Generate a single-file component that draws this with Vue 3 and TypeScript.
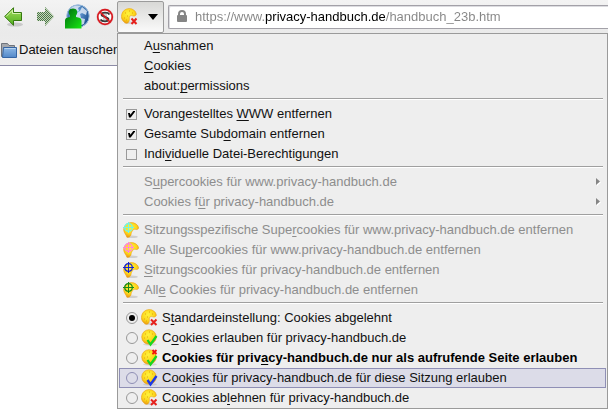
<script setup lang="ts">
import { ref } from 'vue'

type Label = [before: string, key: string, after: string]
type Badge = 'deny' | 'allow' | 'referrer' | 'session'

const address = ref('https://www.privacy-handbuch.de/handbuch_23b.htm')

const links: Label[] = [
  ['A', 'u', 'snahmen'],
  ['', 'C', 'ookies'],
  ['about:', 'p', 'ermissions'],
]

const options = ref<{ label: Label; checked: boolean }[]>([
  { label: ['Vorangestelltes ', 'W', 'WW entfernen'], checked: true },
  { label: ['Gesamte Sub', 'd', 'omain entfernen'], checked: true },
  { label: ['Indi', 'v', 'iduelle Datei-Berechtigungen'], checked: false },
])

const submenus: Label[] = [
  ['S', 'u', 'percookies für www.privacy-handbuch.de'],
  ['Cookies f', 'ü', 'r privacy-handbuch.de'],
]

const removals: { label: Label; color: string }[] = [
  { label: ['Sitzungsspezifische Supe', 'r', 'cookies für www.privacy-handbuch.de entfernen'], color: '#70f4e8' },
  { label: ['Alle Su', 'p', 'ercookies für www.privacy-handbuch.de entfernen'], color: '#ff86dc' },
  { label: ['', 'S', 'itzungscookies für privacy-handbuch.de entfernen'], color: '#1420d8' },
  { label: ['All', 'e', ' Cookies für privacy-handbuch.de entfernen'], color: '#168a1c' },
]

const policies: { label: Label; badge: Badge }[] = [
  { label: ['S', 't', 'andardeinstellung: Cookies abgelehnt'], badge: 'deny' },
  { label: ['C', 'o', 'okies erlauben für privacy-handbuch.de'], badge: 'allow' },
  { label: ['Cookies für priv', 'a', 'cy-handbuch.de nur als aufrufende Seite erlauben'], badge: 'referrer' },
  { label: ['Cook', 'i', 'es für privacy-handbuch.de für diese Sitzung erlauben'], badge: 'session' },
  { label: ['Cookies ab', 'l', 'ehnen für privacy-handbuch.de'], badge: 'deny' },
]
const policy = ref(0)
const highlighted = ref(3)
</script>

<template>
  <div class="browser">
    <svg class="defs" aria-hidden="true">
      <defs>
        <radialGradient id="dough" cx="45%" cy="35%" r="65%">
          <stop offset="0" stop-color="#fff33c" />
          <stop offset=".65" stop-color="#fbd51c" />
          <stop offset="1" stop-color="#ec9a10" />
        </radialGradient>
        <linearGradient id="leaf" x1="0" y1="0" x2="0" y2="1">
          <stop offset="0" stop-color="#a5dc60" />
          <stop offset="1" stop-color="#4fb01c" />
        </linearGradient>
        <linearGradient id="person" x1="0" y1="0" x2="1" y2="1">
          <stop offset="0" stop-color="#006b10" />
          <stop offset="1" stop-color="#16e810" />
        </linearGradient>
        <radialGradient id="globe" cx="40%" cy="35%" r="65%">
          <stop offset="0" stop-color="#7fb6ec" />
          <stop offset="1" stop-color="#1d5190" />
        </radialGradient>
        <linearGradient id="folder" x1="0" y1="0" x2="0" y2="1">
          <stop offset="0" stop-color="#8db8e6" />
          <stop offset="1" stop-color="#5288c8" />
        </linearGradient>
        <pattern id="dither" width="2" height="2" patternUnits="userSpaceOnUse">
          <path d="M0 0h1v1H0zM1 1h1v1H1z" fill="#4b7050" />
        </pattern>
        <g id="cookie">
          <ellipse cx="9" cy="14.800" rx="6" ry="1.300" fill="#888" opacity=".25" />
          <path d="M3 14C.5 12 0 9 .7 6.500 1.500 3 4.500.7 8 .6c3.800 0 6.500 1.900 7.400 5.400-.4 1.800-1.900 2.400-3.400 2-1.300-.6-2.500-.6-3.300.4-.7.900-.2 1.800-.3 3-.1 1.900-1 3.800-2.600 3.900-1 0-2-.5-2.800-1.300z" fill="url(#dough)" stroke="#e9a31d" stroke-width=".6" />
          <path d="M4 5h1M8 3h1M6 8h1M3 10h1M11 5h1M5 12h1" stroke="#e2a40c" />
        </g>
        <g id="bitten-cookie">
          <ellipse cx="9" cy="14.800" rx="6" ry="1.300" fill="#888" opacity=".3" />
          <path d="M4 15.300C3 12.500 1 11 .7 8 .6 4 4 .6 8 .6c4 0 7 2 7.700 5.400-1 1.800-2.200 1.800-3.500 1.200-1.500-.2-2.200.8-3 2-.9 1.200-1 2-1.200 3.500-.3 1.800-2 2.800-4 2.600z" fill="url(#dough)" stroke="#eea01a" stroke-width=".6" />
        </g>
        <g id="whole-cookie">
          <ellipse cx="9" cy="15.300" rx="7" ry="1.200" fill="#888" opacity=".25" />
          <circle cx="8" cy="8" r="7.300" fill="url(#dough)" stroke="#e9a31d" stroke-width=".6" />
          <path d="M4 5h1M8 3h1M6 8h1M3 9h1M11 5h1M7 12h1" stroke="#e2a40c" />
        </g>
      </defs>
    </svg>

    <header>
      <div class="toolbar">
        <button class="tool" aria-label="Zurück">
          <svg width="20" height="20" viewBox="0 0 20 20">
            <ellipse cx="11" cy="17.500" rx="8" ry="2" fill="#777" opacity=".3" />
            <path d="M.7 9.500 9.500.7V5.500H17.500V13.500H9.500V18.300z" fill="url(#leaf)" stroke="#35780f" />
            <path d="M2.200 9.500 8.500 3.200V6.500H16.500" fill="none" stroke="#d3f2ae" />
          </svg>
        </button>
        <button class="tool forward" aria-label="Vor" disabled>
          <svg width="20" height="20" viewBox="0 0 20 20">
            <path d="M19 9.500 10 0V5H2V14H10V19z" fill="#c6dcb5" />
            <path d="M19 9.500 10 0V5H2V14H10V19z" fill="url(#dither)" />
          </svg>
        </button>
        <button class="tool wide" aria-label="Identität">
          <svg width="26" height="26" viewBox="0 0 26 26">
            <circle cx="14" cy="12" r="11.200" fill="url(#globe)" stroke="#9bbcdc" />
            <path d="M6 5c3-4 8-4 11-3l-3 2 1 3-4 1-2-3zM18 3l5 4-1 4-4-2-2 1 1 4 4 1-1 5-5 2-1-6-3-3 3-5 2-1z" fill="#dce8f4" opacity=".85" />
            <path d="M1 24.500V17c0-3 2-3.500 5-4V11.500C3.500 8 5 4.500 9 4.500s5.500 3.500 3 7V13c3 .5 5.500 1 5.500 4v7.500z" fill="url(#person)" />
          </svg>
        </button>
        <button class="tool stop" aria-label="Skripte sperren">
          <svg width="18" height="18" viewBox="0 0 18 18">
            <circle cx="9" cy="9" r="7.500" fill="#fff" stroke="#e6d6d6" stroke-width="2.600" />
            <path d="M13.500 6.500C12 4 5.500 4 5.500 6.700c0 2.300 7 2 7 4.600 0 2.700-6.500 2.700-8 .2" fill="none" stroke="#333" stroke-width="1.800" />
            <path d="M8 4v10M10 4v10" stroke="#555" stroke-width=".6" />
            <circle cx="9" cy="9" r="7.300" fill="none" stroke="#d81920" stroke-width="1.700" />
            <path d="M4 4l10 10" stroke="#e01a20" stroke-width="1.700" />
          </svg>
        </button>
        <button class="cookie-button" aria-label="Cookie-Berechtigungen" aria-haspopup="menu" aria-expanded="true">
          <svg width="18" height="18" viewBox="0 0 18 18">
            <use href="#cookie" />
            <path d="M10.500 10.500l5 5.500M15.500 10.500l-5 5.500" stroke="#e6201c" stroke-width="2" />
          </svg>
          <svg width="10" height="6" viewBox="0 0 10 6"><path d="M0 0h10L5 6z" /></svg>
        </button>
        <div class="address">
          <svg width="12" height="13" viewBox="0 0 12 13">
            <path d="M3 6V4a3 3 0 0 1 6 0v2" fill="none" stroke="#858585" stroke-width="2" />
            <rect x="1" y="5" width="10" height="7" rx="1" fill="#858585" />
          </svg>
          <input v-model="address" type="text" aria-label="Adresse" spellcheck="false" />
        </div>
      </div>
      <nav class="bookmarks">
        <a href="#">
          <svg width="18" height="18" viewBox="0 0 18 18">
            <path d="M1.500 15.500V2.500H7.500L9 4.500H14.500V15.500z" fill="#a5a8ad" stroke="#6f747c" />
            <path d="M3.500 6.500H16.500V16.500H2.500z" fill="url(#folder)" stroke="#3565a4" />
            <path d="M4.500 7.500H15.500" stroke="#b8d4f0" />
          </svg>
          <span>Dateien tauschen</span>
        </a>
      </nav>
    </header>

    <div class="menu" role="menu" aria-label="Cookie-Berechtigungen">
      <div class="group">
        <button v-for="item in links" :key="item.join('')" class="row" role="menuitem">
          <span class="gutter"></span>
          <span>{{ item[0] }}<u>{{ item[1] }}</u>{{ item[2] }}</span>
        </button>
      </div>
      <div class="group">
        <label v-for="item in options" :key="item.label.join('')" class="row">
          <span class="gutter"><input v-model="item.checked" type="checkbox" /></span>
          <span>{{ item.label[0] }}<u>{{ item.label[1] }}</u>{{ item.label[2] }}</span>
        </label>
      </div>
      <div class="group">
        <button v-for="item in submenus" :key="item.join('')" class="row" role="menuitem" aria-haspopup="menu" disabled>
          <span class="gutter"></span>
          <span>{{ item[0] }}<u>{{ item[1] }}</u>{{ item[2] }}</span>
          <svg class="arrow" width="5" height="8" viewBox="0 0 5 8">
            <path d="M1 1v7l4-3.500z" fill="#fff" />
            <path d="M0 0v7l4-3.500z" fill="#858585" />
          </svg>
        </button>
      </div>
      <div class="group">
        <button v-for="item in removals" :key="item.label.join('')" class="row" role="menuitem" disabled>
          <span class="gutter target">
            <svg width="16" height="17" viewBox="0 0 16 17">
              <use href="#bitten-cookie" />
              <g fill="none" :stroke="item.color">
                <circle cx="5.500" cy="5.500" r="3.800" stroke-width="1.300" />
                <path d="M5.500 0v11M0 5.500h11" />
              </g>
            </svg>
          </span>
          <span>{{ item.label[0] }}<u>{{ item.label[1] }}</u>{{ item.label[2] }}</span>
        </button>
      </div>
      <div class="group">
        <label
          v-for="(item, index) in policies"
          :key="item.label.join('')"
          class="row"
          :class="{ highlighted: index === highlighted, strong: item.badge === 'referrer' }"
          @mouseenter="highlighted = index"
        >
          <span class="gutter policy">
            <input v-model="policy" type="radio" name="policy" :value="index" />
            <svg width="18" height="18" viewBox="0 0 18 18">
              <use :href="item.badge === 'deny' ? '#cookie' : '#whole-cookie'" />
              <path v-if="item.badge === 'deny'" d="M10 10.500l5.500 5.500M15.500 10.500l-5.500 5.500" stroke="#e6201c" stroke-width="2" />
              <path v-if="item.badge === 'allow' || item.badge === 'referrer'" d="M6.500 11l3 4.500L15.500 7" fill="none" stroke="#14d820" stroke-width="2.200" />
              <path v-if="item.badge === 'session'" d="M6.500 11l3 4.500L15.500 7" fill="none" stroke="#1c38e8" stroke-width="2.400" />
              <path v-if="item.badge === 'referrer'" d="M11.500 1l4 4M15.500 1l-4 4" stroke="#f01010" stroke-width="1.800" />
            </svg>
          </span>
          <span>{{ item.label[0] }}<u>{{ item.label[1] }}</u>{{ item.label[2] }}</span>
        </label>
      </div>
    </div>
  </div>
</template>

<style>
body {
  background: #fff;
}
</style>

<style scoped>
.browser {
  position: relative;
  min-height: 100vh;
  overflow: hidden;
  color: #111;
  font: 13px/20px 'Liberation Sans', Arial, sans-serif;
}
.browser * {
  box-sizing: border-box;
}
.defs {
  position: absolute;
  width: 0;
  height: 0;
}
svg {
  display: block;
  flex: none;
}
button,
input {
  margin: 0;
  padding: 0;
  border: 0;
  background: none;
  color: inherit;
  font: inherit;
}
header {
  border-bottom: 1px solid #8c8ba6;
  background: linear-gradient(#f3f3f3, #eaeaea 33px, #eee);
}
.toolbar {
  display: flex;
  align-items: center;
  height: 33px;
  padding-left: 2px;
}
.tool {
  display: grid;
  flex: none;
  place-items: center;
  width: 24px;
  height: 28px;
}
.forward {
  margin-left: 7px;
}
.wide {
  width: 28px;
  margin: 0 4px 0 6px;
}
.stop {
  width: 20px;
}
.cookie-button {
  display: flex;
  flex: none;
  align-items: center;
  gap: 9px;
  width: 47px;
  height: 32px;
  margin: 1px 4px 0 2px;
  padding-left: 3px;
  border: 1px solid #9b9b9b;
  border-radius: 2px;
  background: linear-gradient(#d8d8d6, #fafafa);
}
.address {
  display: flex;
  flex: 1;
  align-items: center;
  gap: 7px;
  min-width: 0;
  height: 24px;
  padding-left: 7px;
  border: 1px solid #a3a1a8;
  border-right: 0;
  border-radius: 2px 0 0 2px;
  background: #fff;
  box-shadow: inset 1px 1px #dcdce0;
}
.address input {
  flex: 1;
  min-width: 0;
  height: 20px;
  outline: 0;
  background: linear-gradient(90deg, #858585 70px, #000 70px 190px, #858585 190px);
  background-clip: text;
  color: transparent;
}
.bookmarks {
  height: 32px;
  padding: 7px 0 0;
}
.bookmarks a {
  display: flex;
  align-items: center;
  gap: 1px;
  width: max-content;
  color: inherit;
  text-decoration: none;
}
.menu {
  position: absolute;
  top: 33px;
  right: 0;
  left: 117px;
  padding: 2px 1px 0;
  border: 1px solid #9a9a9a;
  background: #eee;
}
.group + .group::before {
  display: block;
  height: 1px;
  margin: 2px 3px 4px 4px;
  border-top: 1px solid #9f9f9f;
  background: #fff;
  content: '';
}
.row {
  display: flex;
  align-items: center;
  width: 100%;
  height: 20px;
  border: 1px solid transparent;
  text-align: left;
  white-space: nowrap;
}
.row:disabled {
  color: #8d8d8d;
}
.gutter {
  display: flex;
  align-items: center;
  width: 24px;
  flex: none;
  padding-left: 6px;
}
.gutter.target {
  padding-left: 3px;
}
.gutter.policy {
  gap: 3px;
  width: 42px;
}
u {
  text-decoration-skip-ink: none;
  text-decoration-thickness: 1px;
  text-underline-offset: 2px;
}
.arrow {
  margin: 0 4px 0 auto;
}
.strong {
  color: #000;
  font-weight: bold;
}
.highlighted {
  border-color: #8f8fb5;
  background: #dcdce8;
}
input[type='checkbox'],
input[type='radio'] {
  display: grid;
  place-items: center;
  width: 11px;
  height: 11px;
  border: 1px solid #999;
  appearance: none;
}
input[type='checkbox']:checked::before {
  width: 7px;
  height: 7px;
  background: #000;
  clip-path: polygon(0 35%, 28% 35%, 34% 60%, 80% 0, 100% 0, 100% 18%, 38% 100%, 14% 100%);
  content: '';
}
input[type='radio'] {
  width: 12px;
  height: 12px;
  border-radius: 50%;
}
input[type='radio']:checked::before {
  width: 6px;
  height: 6px;
  border-radius: 50%;
  background: #000;
  content: '';
}
.highlighted input[type='radio'] {
  border-color: #8f8fb5;
}
</style>
